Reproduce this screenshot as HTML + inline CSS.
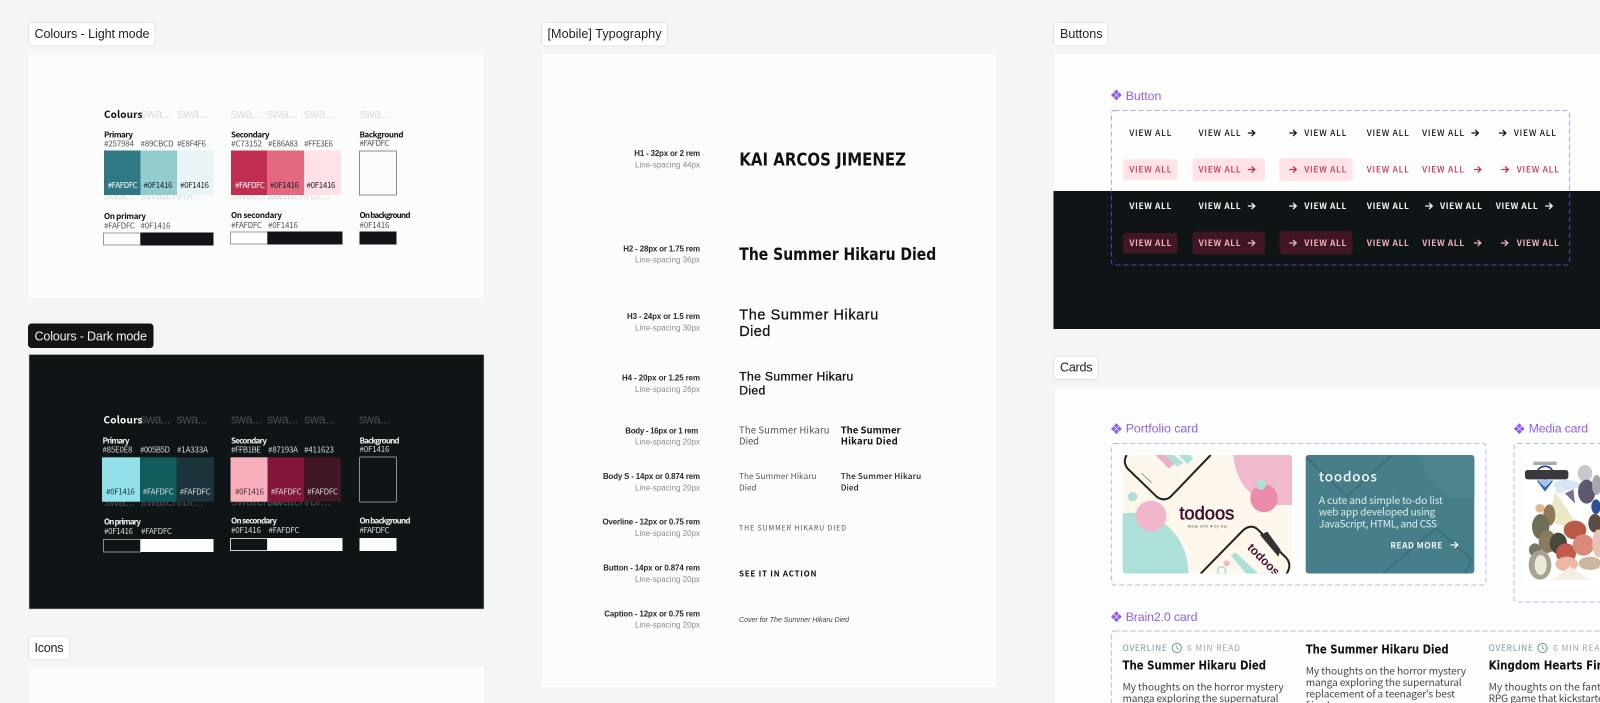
<!DOCTYPE html>
<html><head><meta charset="utf-8"><title>Design system</title>
<style>
html,body{margin:0;padding:0;width:1600px;height:703px;overflow:hidden;background:#f5f5f5}
svg{display:block;filter:blur(.3px)}
text{font-family:"Noto Sans CJK JP","Liberation Sans",sans-serif;white-space:pre}
.lb{font-family:"Liberation Sans",sans-serif;font-size:12.6px;fill:#222}
.h{font-size:8px;fill:#555}
.t{font-size:8px;font-weight:700;fill:#111}
.g{font-size:12.5px;fill:#dcdddd;font-family:"Liberation Sans",sans-serif}
.gd{font-size:12.5px;fill:#4b4e51;font-family:"Liberation Sans",sans-serif}
.d .h{fill:#d5d8d8}.d .t{fill:#f2f4f4}
.a{font-family:"Liberation Sans",sans-serif;font-size:7.9px;font-weight:700;fill:#2a2a2a;text-anchor:end}
.b{font-family:"Liberation Sans",sans-serif;font-size:7.9px;fill:#8a8c8d;text-anchor:end}
.p{font-family:"Liberation Sans",sans-serif;fill:#111}
.x{font-family:"DejaVu Sans",sans-serif;font-weight:700;fill:#111}
.v{font-size:9.5px;font-family:"Noto Sans CJK JP",sans-serif}
.c{font-family:"Liberation Sans",sans-serif;font-size:12.4px;fill:#9160ea}
.vw{font-size:8.4px;font-weight:500}
.o{font-size:8.4px;fill:#74989c}
.bd{font-size:10.2px;fill:#444b4d}
.ct{font-family:"DejaVu Sans",sans-serif;font-size:12.4px;font-weight:700;fill:#111}
</style></head>
<body>
<svg width="1600" height="703" viewBox="0 0 1600 703" xmlns="http://www.w3.org/2000/svg">
<defs>
<g id="ar"><path d="M-3.6 0H3.2M.2-3 3.4 0 .2 3" fill="none" stroke="currentColor" stroke-width="1.25"/></g>
<g id="dm" fill="#8b5cf6"><path d="M0-5.4 2.5-2.9 0-.4-2.5-2.9ZM0 5.4 2.5 2.9 0 .4-2.5 2.9ZM-5.4 0-2.9-2.5-.4 0-2.9 2.5ZM5.4 0 2.9-2.5.4 0 2.9 2.5Z"/></g>
<clipPath id="lt"><rect x="1100" y="100" width="500" height="91"/></clipPath>
<clipPath id="dk"><rect x="1100" y="191" width="500" height="90"/></clipPath>
<clipPath id="im"><rect x="38" y="45" width="508" height="356" rx="9"/></clipPath>
<clipPath id="tc"><rect x="1305.7" y="455" width="168.6" height="118.5" rx="3"/></clipPath>
</defs>

<!-- Colours light -->
<rect x="28.5" y="22.5" width="126.5" height="23.5" rx="4" fill="#fff" stroke="#e3e3e3"/>
<text class="lb" x="34.5" y="38" textLength="115">Colours - Light mode</text>
<rect x="28.5" y="53" width="455" height="245" fill="#fbfcfc"/>
<g>
<text class="g" x="140.7" y="118" textLength="31">swa...</text><text class="g" x="177.3" y="118" textLength="31">swa...</text><text class="g" x="230.7" y="118" textLength="31">swa...</text><text class="g" x="267" y="118" textLength="31">swa...</text><text class="g" x="304" y="118" textLength="31">swa...</text><text class="g" x="359.5" y="118" textLength="31">swa...</text>
<text class="g" x="104" y="199.5" textLength="31">swa...</text><text class="g" x="140.5" y="199.5" textLength="63">swatch/br...</text><text class="g" x="231" y="199.5" textLength="63">swatch/br...</text><text class="g" x="268" y="199.5" textLength="63">swatch/br...</text>
<text x="104" y="118" textLength="38.5" style="font-size:10px;font-weight:700;fill:#111">Colours</text>
<text class="t" x="104" y="137.5" textLength="29">Primary</text>
<text class="h" x="104" y="146.7" textLength="30">#257984</text><text class="h" x="140.5" y="146.7" textLength="33">#89CBCD</text><text class="h" x="177" y="146.7" textLength="29">#E8F4F6</text>
<rect x="104" y="150.5" width="36.5" height="44.5" fill="#317885"/><rect x="140.5" y="150.5" width="36.5" height="44.5" fill="#92cccd"/><rect x="177" y="150.5" width="36.5" height="44.5" fill="#e8f4f6"/>
<text class="h" x="107.7" y="188" textLength="30" style="fill:#fafdfc">#FAFDFC</text><text class="h" x="143.5" y="188" textLength="29" style="fill:#223">#0F1416</text><text class="h" x="180" y="188" textLength="29" style="fill:#223">#0F1416</text>
<text class="t" x="231" y="137.5" textLength="38.5">Secondary</text>
<text class="h" x="231" y="146.7" textLength="31">#C73152</text><text class="h" x="268" y="146.7" textLength="30">#E86A83</text><text class="h" x="304" y="146.7" textLength="29">#FFE3E6</text>
<rect x="231" y="150.5" width="36.5" height="44.5" fill="#c02f52"/><rect x="267" y="150.5" width="37" height="44.5" fill="#e2697f"/><rect x="304" y="150.5" width="37" height="44.5" fill="#ffe1e6"/>
<text class="h" x="235" y="188" textLength="30" style="fill:#fafdfc">#FAFDFC</text><text class="h" x="270" y="188" textLength="29" style="fill:#223">#0F1416</text><text class="h" x="306.5" y="188" textLength="29" style="fill:#223">#0F1416</text>
<text class="t" x="359.5" y="137.5" textLength="44">Background</text><text class="h" x="359.5" y="146" textLength="30">#FAFDFC</text>
<rect x="359.5" y="151" width="37" height="44" fill="#fbfcfc" stroke="#8b8d8e"/>
<text class="t" x="104" y="219" textLength="42">On primary</text>
<text class="h" x="104" y="228.5" textLength="31">#FAFDFC</text><text class="h" x="140.5" y="228.5" textLength="30">#0F1416</text>
<rect x="103.5" y="233" width="37" height="12" fill="#fdfdfd" stroke="#9a9b9b"/><rect x="140.5" y="232.5" width="73" height="13" fill="#111416"/>
<text class="t" x="231" y="218" textLength="51">On secondary</text>
<text class="h" x="231" y="228" textLength="31">#FAFDFC</text><text class="h" x="268" y="228" textLength="30">#0F1416</text>
<rect x="230.5" y="232" width="37" height="12" fill="#fdfdfd" stroke="#9a9b9b"/><rect x="267.5" y="231.5" width="75" height="13" fill="#111416"/>
<text class="t" x="359.5" y="218" textLength="51">On background</text><text class="h" x="359.5" y="228" textLength="30">#0F1416</text>
<rect x="359.5" y="231.5" width="37" height="13" fill="#111416"/>
</g>

<!-- Colours dark -->
<rect x="28" y="323.5" width="125.5" height="24.5" rx="3.5" fill="#121416"/>
<text class="lb" x="34.5" y="340.3" textLength="112.5" style="fill:#f0f0f0">Colours - Dark mode</text>
<rect x="29" y="354.5" width="455" height="254.5" fill="#0f1416" stroke="#c9cbcb" stroke-width=".5"/>
<g class="d">
<text class="gd" x="140.3" y="423.5" textLength="30">swa...</text><text class="gd" x="176.5" y="423.5" textLength="31">swa...</text><text class="gd" x="231" y="423.5" textLength="31">swa...</text><text class="gd" x="267" y="423.5" textLength="31">swa...</text><text class="gd" x="304" y="423.5" textLength="31">swa...</text><text class="gd" x="359" y="423.5" textLength="31">swa...</text>
<text class="gd" x="104" y="506" textLength="31">swa...</text><text class="gd" x="140.5" y="506" textLength="63">swatch/br...</text><text class="gd" x="231" y="505.5" textLength="63">swatch/br...</text><text class="gd" x="268" y="505.5" textLength="63">swatch/br...</text>
<text x="103.5" y="423.3" textLength="39" style="font-size:10px;font-weight:700;fill:#fff">Colours</text>
<text class="t" x="102.5" y="443.3" textLength="27">Primary</text>
<text class="h" x="102.5" y="452.7" textLength="30">#85E0E8</text><text class="h" x="140" y="452.7" textLength="30">#005B5D</text><text class="h" x="177" y="452.7" textLength="31">#1A333A</text>
<rect x="102" y="457.3" width="38" height="44.4" fill="#93e1e8"/><rect x="140" y="457.3" width="36.5" height="44.4" fill="#135c5e"/><rect x="176.5" y="457.3" width="37.5" height="44.4" fill="#1b333a"/>
<text class="h" x="106" y="494.3" textLength="29" style="fill:#1a3338">#0F1416</text><text class="h" x="142.7" y="494.3" textLength="31">#FAFDFC</text><text class="h" x="179.7" y="494.3" textLength="31">#FAFDFC</text>
<text class="t" x="231" y="443.3" textLength="36">Secondary</text>
<text class="h" x="231" y="452.7" textLength="30">#FFB1BE</text><text class="h" x="268" y="452.7" textLength="30">#87193A</text><text class="h" x="304" y="452.7" textLength="30">#411623</text>
<rect x="230.5" y="457.3" width="37" height="44.4" fill="#f9aebc"/><rect x="267.5" y="457.3" width="36.5" height="44.4" fill="#84163a"/><rect x="304" y="457.3" width="37" height="44.4" fill="#411623"/>
<text class="h" x="235" y="494.3" textLength="29" style="fill:#4a3038">#0F1416</text><text class="h" x="270.7" y="494.3" textLength="31">#FAFDFC</text><text class="h" x="307" y="494.3" textLength="31">#FAFDFC</text>
<text class="t" x="359.5" y="443.3" textLength="40">Background</text><text class="h" x="359.5" y="452" textLength="30">#0F1416</text>
<rect x="359.5" y="457" width="37" height="45" rx="1" fill="#0f1416" stroke="#8b8d8e"/>
<text class="t" x="104" y="524.7" textLength="37">On primary</text>
<text class="h" x="104" y="534" textLength="29">#0F1416</text><text class="h" x="141" y="534" textLength="31">#FAFDFC</text>
<rect x="103.5" y="539.5" width="37" height="12.5" fill="#0f1416" stroke="#8a8c8c"/><rect x="140.5" y="539" width="73" height="13" fill="#fdfdfd"/>
<text class="t" x="231" y="523.5" textLength="46">On secondary</text>
<text class="h" x="231" y="533" textLength="30">#0F1416</text><text class="h" x="268.5" y="533" textLength="31">#FAFDFC</text>
<rect x="230.5" y="538.5" width="37" height="12" fill="#0f1416" stroke="#d0d0d0"/><rect x="267.5" y="538" width="75" height="13" fill="#fdfdfd"/>
<text class="t" x="359.5" y="523.5" textLength="51">On background</text><text class="h" x="359.5" y="533" textLength="30">#FAFDFC</text>
<rect x="359.5" y="538" width="37" height="13" fill="#fdfdfd"/>
</g>

<!-- Icons -->
<rect x="28.5" y="636" width="41" height="24" rx="4" fill="#fff" stroke="#e3e3e3"/>
<text class="lb" x="34.5" y="652" textLength="29">Icons</text>
<rect x="29" y="667" width="455" height="36" fill="#fbfcfc"/>

<!-- Typography -->
<rect x="541.5" y="22.5" width="126" height="23.5" rx="4" fill="#fff" stroke="#e3e3e3"/>
<text class="lb" x="547.5" y="38" textLength="114">[Mobile] Typography</text>
<rect x="542" y="54" width="454" height="633" fill="#fbfcfc"/>
<text class="a" x="700" y="156" textLength="65.7">H1 - 32px or 2 rem</text><text class="b" x="700" y="167.3" textLength="65">Line-spacing 44px</text>
<text class="x" x="739.3" y="165.7" textLength="166.7" style="font-size:18px" lengthAdjust="spacingAndGlyphs">KAI ARCOS JIMENEZ</text>
<text class="a" x="700" y="251.3" textLength="76.7">H2 - 28px or 1.75 rem</text><text class="b" x="700" y="262.7" textLength="65">Line-spacing 36px</text>
<text class="x" x="739.3" y="260" textLength="197" style="font-size:16.5px" lengthAdjust="spacingAndGlyphs">The Summer Hikaru Died</text>
<text class="a" x="700" y="319" textLength="73">H3 - 24px or 1.5 rem</text><text class="b" x="700" y="330.3" textLength="65">Line-spacing 30px</text>
<g stroke="#111" stroke-width=".25"><text class="p" x="739.3" y="319.5" textLength="139" style="font-size:14.5px">The Summer Hikaru</text><text class="p" x="739.3" y="336" textLength="31" style="font-size:14.5px">Died</text></g>
<text class="a" x="700" y="380.7" textLength="78">H4 - 20px or 1.25 rem</text><text class="b" x="700" y="392" textLength="65">Line-spacing 26px</text>
<g stroke="#111" stroke-width=".3"><text class="p" x="739.3" y="380.7" textLength="114" style="font-size:12.2px">The Summer Hikaru</text><text class="p" x="739.3" y="394.7" textLength="26" style="font-size:12.2px">Died</text></g>
<text class="a" x="698.3" y="433.3" textLength="73">Body - 16px or 1 rem</text><text class="b" x="700" y="444.7" textLength="65">Line-spacing 20px</text>
<text class="v" x="739" y="433.3" textLength="90.5" fill="#555">The Summer Hikaru</text><text class="v" x="739" y="444.7" textLength="20" fill="#555">Died</text>
<text class="v" x="840.7" y="433.3" textLength="60" fill="#111" font-weight="700">The Summer</text><text class="v" x="840.7" y="444.7" textLength="57" fill="#111" font-weight="700">Hikaru Died</text>
<text class="a" x="700" y="479" textLength="97">Body S - 14px or 0.874 rem</text><text class="b" x="700" y="490.5" textLength="65">Line-spacing 20px</text>
<text class="v" x="739" y="479" textLength="77.5" fill="#555" style="font-size:8.2px">The Summer Hikaru</text><text class="v" x="739" y="490.5" textLength="17.5" fill="#555" style="font-size:8.2px">Died</text>
<text class="v" x="840.7" y="479" textLength="80.5" fill="#222" style="font-size:8.2px;font-weight:500">The Summer Hikaru</text><text class="v" x="840.7" y="490.5" textLength="18" fill="#222" style="font-size:8.2px;font-weight:500">Died</text>
<text class="a" x="700" y="524.7" textLength="97.5">Overline - 12px or 0.75 rem</text><text class="b" x="700" y="536" textLength="65">Line-spacing 20px</text>
<text class="v" x="739" y="530.7" textLength="107" fill="#555" style="font-size:7px">THE SUMMER HIKARU DIED</text>
<text class="a" x="700" y="570.3" textLength="96.7">Button - 14px or 0.874 rem</text><text class="b" x="700" y="582" textLength="65">Line-spacing 20px</text>
<text class="v" x="739" y="576.3" textLength="77.5" fill="#111" style="font-size:8px;font-weight:700">SEE IT IN ACTION</text>
<text class="a" x="700" y="616.3" textLength="95.7">Caption - 12px or 0.75 rem</text><text class="b" x="700" y="627.7" textLength="65">Line-spacing 20px</text>
<text x="739" y="622" textLength="110" style="font-family:'Liberation Sans',sans-serif;font-size:7.2px;font-style:italic;fill:#444">Cover for The Summer Hikaru Died</text>

<!-- Buttons -->
<rect x="1053.5" y="22.5" width="54.5" height="23.5" rx="4" fill="#fff" stroke="#e3e3e3"/>
<text class="lb" x="1060" y="38" textLength="42.5">Buttons</text>
<rect x="1054" y="54" width="546" height="137" fill="#fdfdfd"/>
<rect x="1053.5" y="191" width="546.5" height="138" fill="#0f1416"/>
<use href="#dm" x="1116.4" y="95"/>
<text class="c" x="1125.7" y="100" textLength="35.7">Button</text>
<rect x="1111.4" y="110.5" width="458.2" height="154.5" rx="3" fill="none" stroke="#b5a0ef" stroke-dasharray="5 3" clip-path="url(#lt)"/>
<rect x="1111.4" y="110.5" width="458.2" height="154.5" rx="3" fill="none" stroke="#5a3fb0" stroke-dasharray="5 3" clip-path="url(#dk)"/>
<rect x="1123.2" y="159.3" width="54.3" height="20.7" rx="3" fill="#ffe3e6"/><rect x="1192.5" y="158.5" width="72.5" height="22.5" rx="3" fill="#ffe3e6"/><rect x="1279.3" y="158" width="73.2" height="23" rx="4" fill="#ffe3e6"/>
<rect x="1123" y="233" width="54.5" height="20.5" rx="3" fill="#411623"/><rect x="1192.5" y="231.5" width="72.5" height="23" rx="3" fill="#411623"/><rect x="1279.3" y="231" width="73.2" height="23.5" rx="4" fill="#411623"/>
<g class="vw" fill="#0f1416" color="#0f1416">
<text x="1129.3" y="136" textLength="42">VIEW ALL</text><text x="1198.6" y="136" textLength="42">VIEW ALL</text><use href="#ar" x="1251.4" y="133"/><use href="#ar" x="1292.9" y="133"/><text x="1304.3" y="136" textLength="42">VIEW ALL</text><text x="1366.8" y="136" textLength="42">VIEW ALL</text><text x="1422.1" y="136" textLength="42">VIEW ALL</text><use href="#ar" x="1475" y="133"/><use href="#ar" x="1502.5" y="133"/><text x="1513.9" y="136" textLength="42">VIEW ALL</text>
</g>
<g class="vw" fill="#c73152" color="#c73152">
<text x="1129.3" y="172.5" textLength="42">VIEW ALL</text><text x="1198.6" y="172.5" textLength="42">VIEW ALL</text><use href="#ar" x="1251.4" y="169.5"/><use href="#ar" x="1292.9" y="169.5"/><text x="1304.3" y="172.5" textLength="42">VIEW ALL</text><text x="1366.8" y="172.5" textLength="42">VIEW ALL</text><text x="1422.1" y="172.5" textLength="42">VIEW ALL</text><use href="#ar" x="1477.5" y="169.5"/><use href="#ar" x="1505" y="169.5"/><text x="1516.8" y="172.5" textLength="42">VIEW ALL</text>
</g>
<g class="vw" fill="#f6f8f8" color="#f6f8f8" style="font-weight:700">
<text x="1129.3" y="209" textLength="42">VIEW ALL</text><text x="1198.6" y="209" textLength="42">VIEW ALL</text><use href="#ar" x="1251.4" y="206"/><use href="#ar" x="1292.9" y="206"/><text x="1304.3" y="209" textLength="42">VIEW ALL</text><text x="1366.8" y="209" textLength="42">VIEW ALL</text><use href="#ar" x="1428.9" y="206"/><text x="1440" y="209" textLength="42">VIEW ALL</text><text x="1495.7" y="209" textLength="42">VIEW ALL</text><use href="#ar" x="1548.9" y="206"/>
</g>
<g class="vw" fill="#eeb0bf" color="#eeb0bf" style="font-weight:700">
<text x="1129.3" y="246" textLength="42">VIEW ALL</text><text x="1198.6" y="246" textLength="42">VIEW ALL</text><use href="#ar" x="1251.4" y="243"/><use href="#ar" x="1292.9" y="243"/><text x="1304.3" y="246" textLength="42">VIEW ALL</text><text x="1366.8" y="246" textLength="42">VIEW ALL</text><text x="1422.1" y="246" textLength="42">VIEW ALL</text><use href="#ar" x="1477.5" y="243"/><use href="#ar" x="1504.5" y="243"/><text x="1516.8" y="246" textLength="42">VIEW ALL</text>
</g>

<!-- Cards -->
<rect x="1053.5" y="356" width="44.7" height="23.5" rx="4" fill="#fff" stroke="#e3e3e3"/>
<text class="lb" x="1060" y="371.7" textLength="32.5">Cards</text>
<rect x="1055" y="387" width="545" height="316" fill="#fcfdfd"/>
<use href="#dm" x="1116.4" y="428.7"/><text class="c" x="1125.7" y="432.7" textLength="72.5">Portfolio card</text>
<rect x="1111.4" y="443.5" width="374.6" height="141.5" rx="3" fill="none" stroke="#c3b2f3" stroke-dasharray="5 3"/>
<use href="#dm" x="1519.3" y="428.7"/><text class="c" x="1528.6" y="432.7" textLength="59.6">Media card</text>
<rect x="1514" y="443.5" width="200" height="158.5" rx="3" fill="none" stroke="#c3b2f3" stroke-dasharray="5 3"/>
<use href="#dm" x="1116.4" y="616.7"/><text class="c" x="1125.7" y="621" textLength="71.8">Brain2.0 card</text>
<rect x="1111.4" y="631" width="600" height="120" rx="3" fill="none" stroke="#c3b2f3" stroke-dasharray="5 3"/>

<!-- todoos image -->
<g transform="translate(1110 440) scale(.33333)">
<g clip-path="url(#im)">
<rect x="38" y="45" width="508" height="356" fill="#fdf7ec"/>
<path d="M370 45H546V195H490C420 180 375 120 370 45Z" fill="#f0b9cd"/>
<path d="M38 220C150 205 235 290 235 401H38Z" fill="#aee0da"/>
<circle cx="123" cy="228" r="46" fill="#f0b6cc"/>
<circle cx="68" cy="170" r="14" fill="#aee0da"/>
<ellipse cx="462" cy="175" rx="41" ry="42" fill="#e98bab"/>
<circle cx="453" cy="134" r="15" fill="#aee0da"/>
<path d="M136 45 176 85 194 72 165 45Z" fill="#eab0c8"/><path d="M165 45 200 80 222 68 190 45ZM205 45 232 72 250 55 240 45Z" fill="#aee0da"/>
<path d="M50 45Q38 65 52 85L140 170Q162 186 182 170L302 45" fill="none" stroke="#222" stroke-width="6"/>
<path d="M95 100 125 128" stroke="#666" stroke-width="2"/>
<path d="M272 401 400 270Q425 250 445 270L530 355Q546 375 530 401" fill="#fdf7ec" stroke="#222" stroke-width="6"/>
<path d="M450 285 472 275 512 330 505 350Z" fill="#333"/>
<path d="M362 345 378 338 445 401H408Z" fill="#aee0da"/><circle cx="350" cy="370" r="9" fill="#f0b6cc"/><circle cx="335" cy="392" r="12" fill="none" stroke="#aee0da" stroke-width="5"/>
<text x="410" y="325" transform="rotate(45 410 325)" style="font-family:'Liberation Sans',sans-serif;font-size:36px;font-weight:700;fill:#4a1034">todoos</text>
<text x="208" y="238" textLength="165" lengthAdjust="spacingAndGlyphs" stroke="#3e0c2e" stroke-width="1.6" style="font-family:'Liberation Sans',sans-serif;font-size:56px;fill:#3e0c2e">todoos</text>
<text x="233" y="263" textLength="118" style="font-family:'Liberation Sans',sans-serif;font-size:11px;fill:#444">Made with ♥ by Kai</text>
</g></g>

<!-- teal card -->
<rect x="1305.7" y="455" width="168.6" height="118.5" rx="3" fill="#467f89"/>
<g clip-path="url(#tc)" fill="none" stroke="#3d727e" stroke-width="2.5">
<path d="M1420 455H1475V498H1450Q1425 480 1420 455Z" fill="#4b848e" stroke="none"/>
<path d="M1306 456.7 1347 496.7 1391.8 455M1382.9 573.3 1436.4 528.3 1472 560 1465 573.3"/>
</g>
<text x="1318.9" y="481.7" textLength="58" style="font-size:13.5px;font-weight:500;fill:#f6fafa">toodoos</text>
<g style="font-size:10.2px" fill="#dfecee">
<text x="1318.9" y="504" textLength="124">A cute and simple to-do list</text>
<text x="1318.9" y="515.5" textLength="116.4">web app developed using</text>
<text x="1318.9" y="527.3" textLength="118.2">JavaScript, HTML, and CSS</text>
</g>
<text x="1390.4" y="548.7" textLength="52" style="font-size:8.4px;font-weight:700;fill:#eef5f6">READ MORE</text>
<use href="#ar" x="1454.3" y="545" color="#fafdfc"/>

<!-- Media art -->
<g transform="translate(1490 410) scale(.33333)">
<rect x="100" y="145" width="230" height="385" fill="#fff"/>
<path d="M130 155H200V165H130Z" fill="#555" opacity=".5"/>
<ellipse cx="165" cy="185" rx="22" ry="16" fill="none" stroke="#1d3f9a" stroke-width="5"/>
<path d="M140 212 165 245 190 212Z" fill="#2f62c0"/>
<path d="M146 215 165 232 184 215 165 206Z" fill="#a9c6e8"/>
<rect x="105" y="180" width="130" height="28" rx="8" fill="#3a3a3e"/>
<ellipse cx="230" cy="225" rx="40" ry="15" fill="#b9d3ec" opacity=".6"/>
<ellipse cx="285" cy="190" rx="22" ry="25" fill="#c9c6ce"/>
<ellipse cx="290" cy="245" rx="26" ry="36" fill="#5d5870"/>
<ellipse cx="320" cy="225" rx="14" ry="30" fill="#a8a4ac"/>
<path d="M225 250 250 238 255 280Z" fill="#7a7088"/>
<path d="M195 245 240 310 262 360 175 335Z" fill="#ece8c6"/>
<ellipse cx="210" cy="240" rx="14" ry="10" fill="#e4e8f0"/>
<ellipse cx="150" cy="295" rx="14" ry="13" fill="#e6b690"/>
<ellipse cx="178" cy="315" rx="18" ry="32" fill="#907858"/>
<ellipse cx="152" cy="350" rx="26" ry="38" fill="#6f6f58"/>
<ellipse cx="135" cy="420" rx="18" ry="20" fill="#77746a"/>
<ellipse cx="172" cy="395" rx="26" ry="34" fill="#8a7a5e"/>
<ellipse cx="150" cy="465" rx="34" ry="44" fill="#a8a292"/>
<ellipse cx="152" cy="465" rx="18" ry="30" fill="#efe8d6"/>
<ellipse cx="205" cy="400" rx="26" ry="32" fill="#4a473c"/>
<ellipse cx="255" cy="360" rx="34" ry="28" fill="#b85a45"/>
<ellipse cx="228" cy="430" rx="30" ry="30" fill="#c25a50"/>
<ellipse cx="230" cy="462" rx="34" ry="22" fill="#ecb8a4"/>
<ellipse cx="280" cy="405" rx="32" ry="32" fill="#d98a78"/>
<ellipse cx="318" cy="290" rx="14" ry="22" fill="#2d4f9a"/>
<ellipse cx="315" cy="340" rx="20" ry="28" fill="#5a4c40"/>
<ellipse cx="325" cy="400" rx="18" ry="42" fill="#e6c4b8"/>
<ellipse cx="300" cy="460" rx="34" ry="20" fill="#c9b7a0"/>
<path d="M185 510 240 470 300 510Z" fill="#f4efe6"/>
</g>

<!-- Brain cards -->
<text class="o" x="1122.5" y="651" textLength="44.3">OVERLINE</text><circle cx="1176.8" cy="648" r="4.6" fill="none" stroke="#74989c"/><path d="M1176.8 645.2V648L1178.8 649.5" fill="none" stroke="#74989c" stroke-width=".8"/><text class="o" x="1187.1" y="651" textLength="52.9" style="fill:#9aa8aa">6 MIN READ</text>
<text class="o" x="1488.6" y="651" textLength="44.3">OVERLINE</text><circle cx="1542.5" cy="648" r="4.6" fill="none" stroke="#74989c"/><path d="M1542.5 645.2V648L1544.5 649.5" fill="none" stroke="#74989c" stroke-width=".8"/><text class="o" x="1553.2" y="651" textLength="52.9" style="fill:#9aa8aa">6 MIN READ</text>
<text class="ct" x="1122.5" y="669.3" textLength="143.6" lengthAdjust="spacingAndGlyphs">The Summer Hikaru Died</text>
<text class="ct" x="1305.7" y="653.3" textLength="142.9" lengthAdjust="spacingAndGlyphs">The Summer Hikaru Died</text>
<text class="ct" x="1488.6" y="669.3" textLength="150" lengthAdjust="spacingAndGlyphs">Kingdom Hearts Final Mix</text>
<text class="bd" x="1122.5" y="690.7" textLength="161">My thoughts on the horror mystery</text>
<text class="bd" x="1122.5" y="702" textLength="156">manga exploring the supernatural</text>
<text class="bd" x="1305.7" y="674.7" textLength="160.4">My thoughts on the horror mystery</text>
<text class="bd" x="1305.7" y="686" textLength="156">manga exploring the supernatural</text>
<text class="bd" x="1305.7" y="697.7" textLength="149.3">replacement of a teenager's best</text>
<text class="bd" x="1305.7" y="709" textLength="26">friend.</text>
<text class="bd" x="1488.6" y="690.7" textLength="160">My thoughts on the fantasy action</text>
<text class="bd" x="1488.6" y="702" textLength="167">RPG game that kickstarted the series</text>
</svg>
</body></html>
